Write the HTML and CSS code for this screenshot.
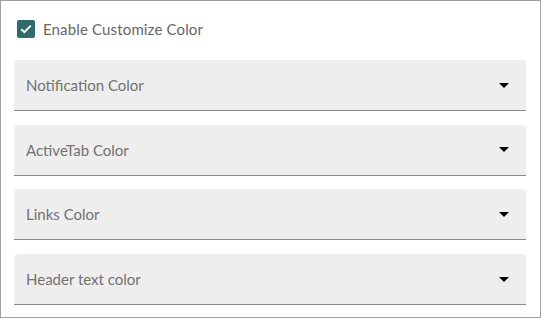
FILE: index.html
```html
<!DOCTYPE html>
<html lang="en">
<head>
    <meta charset="UTF-8">
    <title>Customize Color</title>
    <link rel="stylesheet" href="styles.css">
</head>
<body>
    <div class="panel">
        <label class="check-row">
            <span class="check-box">
                <svg width="12" height="10" viewBox="0 0 12 10"><path d="M1.2 5.2 L4.4 8.2 L10.8 1.6" fill="none" stroke="#fff" stroke-width="2"/></svg>
            </span>
            Enable Customize Color
        </label>
        <div class="fields">
            <div class="select-field">
                <span>Notification Color</span>
                <span class="arrow"></span>
            </div>
            <div class="select-field">
                <span>ActiveTab Color</span>
                <span class="arrow"></span>
            </div>
            <div class="select-field">
                <span>Links Color</span>
                <span class="arrow"></span>
            </div>
            <div class="select-field">
                <span>Header text color</span>
                <span class="arrow"></span>
            </div>
        </div>
    </div>
</body>
</html>
```
FILE: styles.css
```css
body {
    margin: 0;
    font-family: Lato, "Open Sans", sans-serif;
    color: #666;
    background: #fff;
}

.panel {
    width: 541px;
    height: 318px;
    box-sizing: border-box;
    border: 1px solid #a0a0a0;
    padding: 18px 14px 0 13px;
}

.check-row {
    display: flex;
    align-items: center;
    gap: 8px;
    margin-left: 3px;
    font-size: 15px;
    letter-spacing: 0.15px;
    height: 20px;
}

.check-box {
    width: 18px;
    height: 18px;
    border-radius: 2px;
    background: #2f6b6b;
    display: flex;
    align-items: center;
    justify-content: center;
}

.fields {
    display: flex;
    flex-direction: column;
    gap: 13.7px;
    margin-top: 21px;
}

.select-field {
    height: 51px;
    box-sizing: border-box;
    background: #eeeeee;
    border-bottom: 1px solid #8a8a8a;
    border-radius: 4px 4px 0 0;
    display: flex;
    align-items: center;
    justify-content: space-between;
    padding: 0 17px 0 12px;
    font-size: 15px;
    color: #727272;
}

.arrow {
    width: 0;
    height: 0;
    border-left: 5px solid transparent;
    border-right: 5px solid transparent;
    border-top: 5px solid #000;
}
```
